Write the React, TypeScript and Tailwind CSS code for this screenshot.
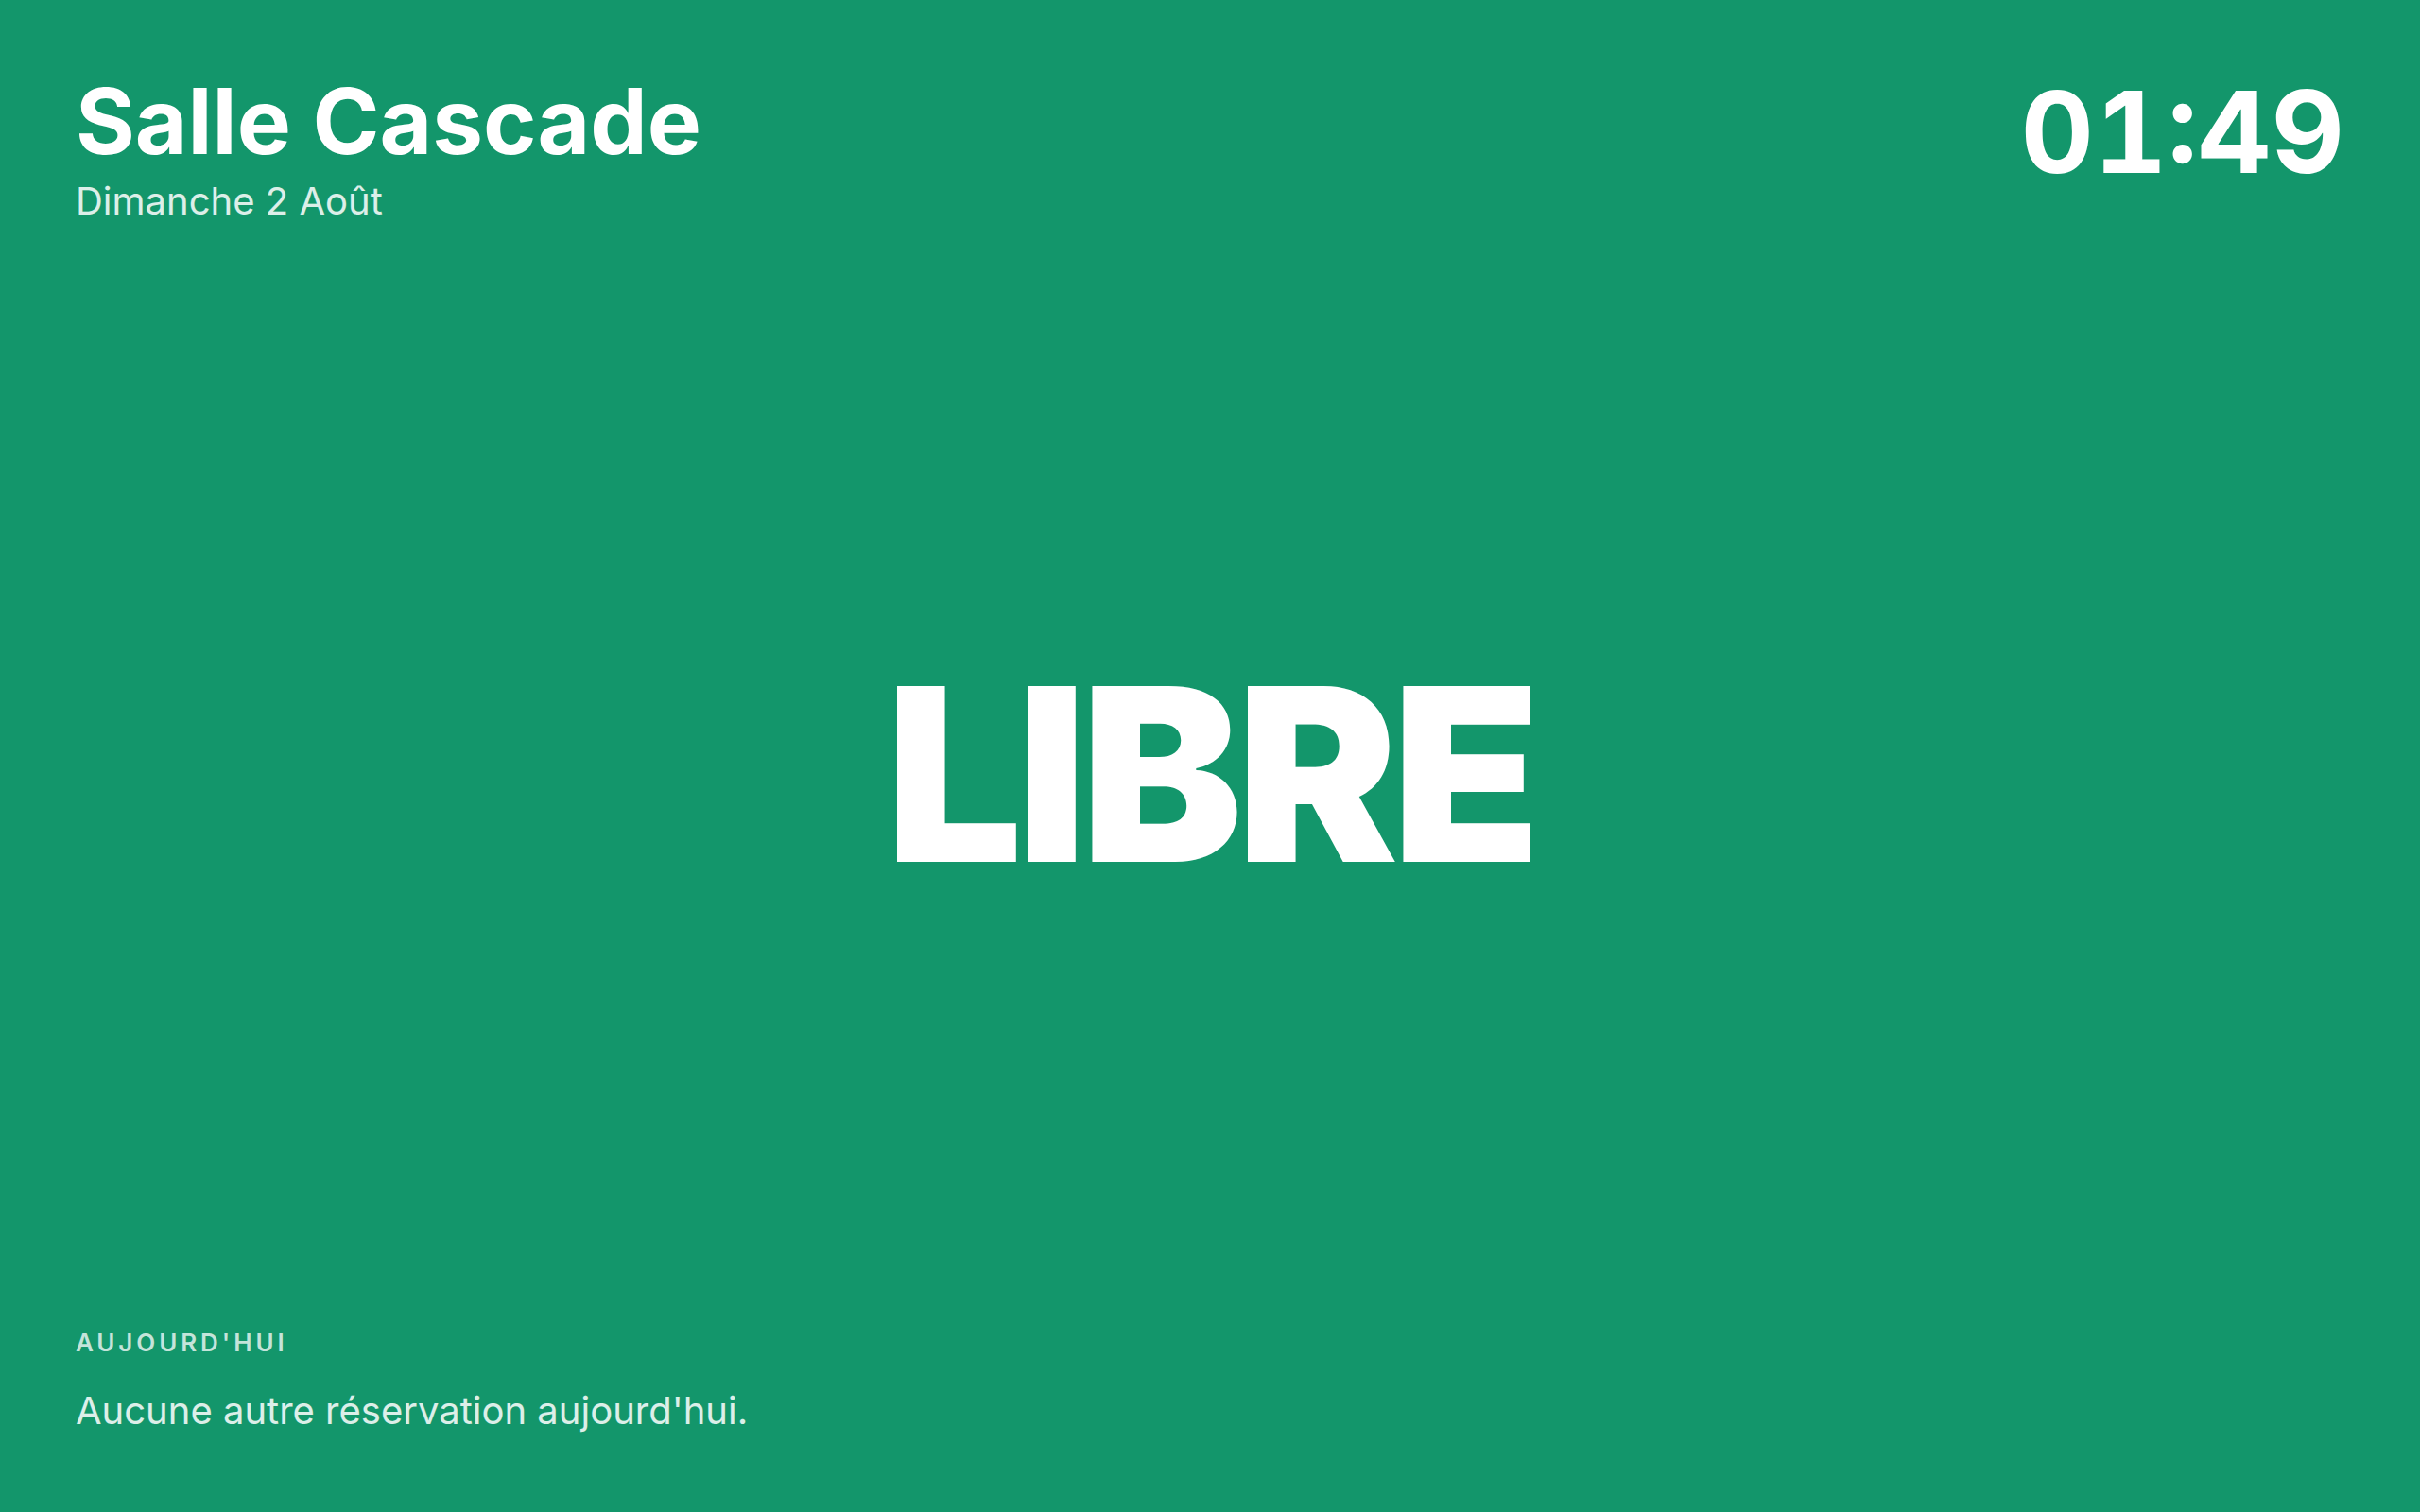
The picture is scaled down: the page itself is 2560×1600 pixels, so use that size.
export default function App() {
  return (
    <div className="flex h-screen w-full flex-col bg-[#13966b] px-20 pt-20 pb-[77px] text-white font-['Inter',sans-serif]">
      <header className="flex items-start justify-between">
        <div>
          <h1 className="text-[96px] font-bold leading-none">Salle Cascade</h1>
          <p className="mt-[7px] text-[40px] leading-[1.5] text-white/85">Dimanche 2 Août</p>
        </div>
        <div className="text-[120px] font-bold leading-none tabular-nums">01:49</div>
      </header>

      <main className="flex flex-1 items-center justify-center pb-[6px]">
        <span className="text-[256px] font-black leading-none tracking-tight">LIBRE</span>
      </main>

      <footer>
        <p className="text-[26px] font-semibold uppercase leading-[1.5] tracking-[0.15em] text-white/75">Aujourd'hui</p>
        <p className="mt-[23px] text-[40px] leading-[1.5] text-white/85">Aucune autre réservation aujourd'hui.</p>
      </footer>
    </div>
  );
}
